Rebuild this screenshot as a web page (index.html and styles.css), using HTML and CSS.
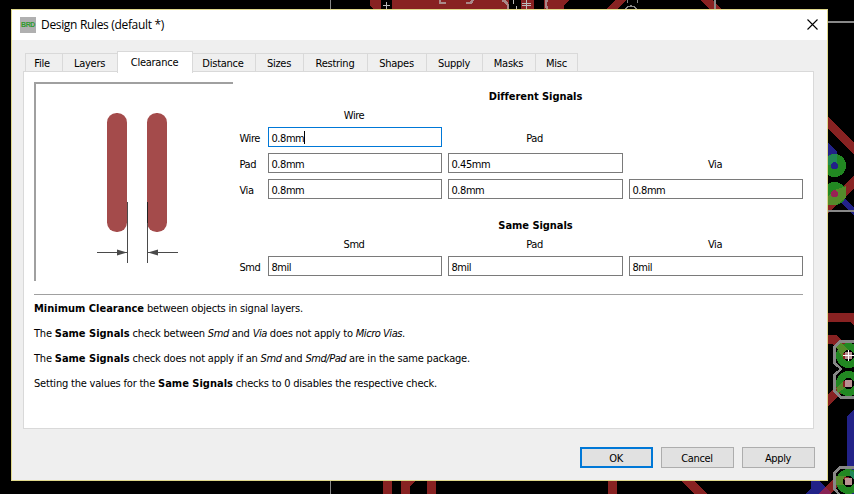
FILE: index.html
```html
<!DOCTYPE html>
<html lang="en">
<head>
<meta charset="utf-8">
<title>Design Rules</title>
<link rel="stylesheet" href="styles.css">
</head>
<body>
<svg class="board" width="854" height="494" viewBox="0 0 854 494" shape-rendering="crispEdges" aria-hidden="true">
  <g fill="#882222">
    <path d="M370 0H381V9H373L370 6ZM392 0H509V9H392ZM521 0H534V9H521ZM544 0H570L564 5V9H544ZM615 0H627L617 9H606ZM700 0H713L721 9H709Z"/>
    <path d="M828 117L854 142V154L828 129ZM854 176V189L828 213V201Z"/>
    <path d="M828 313H854V326L850 322H828ZM828 335H836L851 350L844 356L833 344H828ZM828 395L843 379L851 383L828 407Z"/>
    <path d="M383 481H392V494H383ZM401 481H415L410 486V494H401ZM427 481H436V494H427ZM608 481H617V494H608ZM682 481H695L707 494H694Z"/>
  </g>
  <g fill="#222288">
    <path d="M828 143L837 152V165H828ZM842 196L854 207V216L840 202ZM847 416L854 410V494H847ZM811 481H819L828 490V494H805L811 488Z"/>
  </g>
  <path d="M818 494L836 476H850V485H839L830 494Z" fill="#882222"/>
  <path d="M818 494L825 487L831 493V494Z" fill="#882255"/>
  <g fill="#228822"><circle cx="834.5" cy="165.5" r="11.5"/><circle cx="834.5" cy="193.5" r="11.5"/><circle cx="848.5" cy="355.5" r="12.5"/><circle cx="848.5" cy="383.5" r="12.5"/><circle cx="848.5" cy="481.5" r="12.5"/></g>
  <path d="M828 156L833 154H837V165H828Z" fill="#228855"/>
  <path d="M828 197L834 190L846 186V198L836 205H828ZM836 347L841 343L850 352L843 358ZM836 388L845 379L850 384L838 393ZM836 476H850V485H836Z" fill="#558b2b"/>
  <path d="M850 470L854 472V481H850Z" fill="#22885a"/>
  <circle cx="834.5" cy="165.5" r="3.5" fill="#222288"/>
  <circle cx="834.5" cy="193.5" r="3.5" fill="#992255"/>
  <g fill="#000"><circle cx="848.5" cy="355.5" r="5.5"/><circle cx="848.5" cy="383.5" r="5.5"/><circle cx="848.5" cy="481.5" r="5.5"/></g>
  <path d="M843 353H846V359H843ZM843 381H846V387H843ZM844 477H849V480H844Z" fill="#882222"/>
  <path d="M845 352H852V359H845ZM845 380H852V387H845ZM845 478H852V485H845Z" fill="#b89292"/>
  <path d="M843 355.5H854M848.5 350V361" stroke="#fff"/>
  <g fill="none" stroke="#888">
    <path d="M330.5 0V9M330.5 481V494"/>
    <path stroke-width="2" d="M715 0V9M828 22H854M828 211H854"/>
    <path stroke-width="2.5" d="M854 341.5H840L834.5 347V363L841 369L834.5 375V391L841 397.5H854M854 467.5H840L834.5 473V489L839 494"/>
    <path stroke-width="2.5" stroke="#aa8888" d="M440 0V3H446M466 3H471L473 0M502 0Q507 2 508 5V9M547 0Q545 4 547 9"/>
    <path d="M383 5.5H390M386.500 2V9M513.500 0V4M516.500 6V9M522 3.500H531M522 5.500H531M526.500 0V9" stroke="#bbb"/>
    <path d="M627.500 0V3M637.500 0V3M625 9Q631 3 637 9" stroke-width="1.500"/>
  </g>
</svg>

<main class="dialog">
  <header class="titlebar">
    <span class="app-icon">BRD</span>
    <h1 class="title">Design Rules (default *)</h1>
    <svg class="close" width="11" height="11" viewBox="0 0 11 11"><path d="M.5.5L10.500 10.500M10.500.5L.5 10.500"/></svg>
  </header>

  <nav class="tabs">
    <span class="tab w-file">File</span><span class="tab w-layers">Layers</span><span class="tab active">Clearance</span><span class="tab w-distance">Distance</span><span class="tab w-sizes">Sizes</span><span class="tab w-restring">Restring</span><span class="tab w-shapes">Shapes</span><span class="tab w-supply">Supply</span><span class="tab w-masks">Masks</span><span class="tab w-misc">Misc</span>
  </nav>

  <section class="pane">
    <div class="top">
      <div class="preview">
        <svg width="197" height="196" viewBox="0 0 197 196">
          <g fill="#a44b4b"><rect x="71" y="29" width="20" height="119" rx="9.500"/><rect x="111" y="29" width="20" height="119" rx="9.500"/></g>
          <path class="dim" d="M91.500 118V179M111.500 118V179M61 168.500H91M112 168.500H142"/>
          <path fill="#4a4a4a" d="M81 165.500L91 168.500L81 171.500ZM122 165.500L112 168.500L122 171.500Z"/>
          <path d="M111.500 118V139" stroke="#242020" shape-rendering="crispEdges"/>
        </svg>
      </div>
      <div class="rules">
        <h2 class="heading">Different Signals</h2>
        <div class="row head"><span></span><span class="col">Wire</span></div>
        <div class="row"><span>Wire</span><span class="field focus">0.8mm<i class="caret"></i></span><span class="col">Pad</span></div>
        <div class="row"><span>Pad</span><span class="field">0.8mm</span><span class="field">0.45mm</span><span class="col">Via</span></div>
        <div class="row"><span>Via</span><span class="field">0.8mm</span><span class="field">0.8mm</span><span class="field">0.8mm</span></div>
        <h2 class="heading same">Same Signals</h2>
        <div class="row head"><span></span><span class="col">Smd</span><span class="col">Pad</span><span class="col">Via</span></div>
        <div class="row"><span>Smd</span><span class="field">8mil</span><span class="field">8mil</span><span class="field">8mil</span></div>
      </div>
    </div>
    <div class="notes">
      <p><b>Minimum Clearance</b> between objects in signal layers.</p>
      <p>The <b>Same Signals</b> check between <em>Smd</em> and <em>Via</em> does not apply to <em>Micro Vias</em>.</p>
      <p>The <b>Same Signals</b> check does not apply if an <em>Smd</em> and <em>Smd/Pad</em> are in the same package.</p>
      <p>Setting the values for the <b>Same Signals</b> checks to 0 disables the respective check.</p>
    </div>
  </section>

  <footer class="buttons">
    <button class="btn default">OK</button>
    <button class="btn">Cancel</button>
    <button class="btn">Apply</button>
  </footer>
</main>
</body>
</html>
```
FILE: styles.css
```css
* { box-sizing: border-box; }
body {
  margin: 0;
  width: 854px;
  height: 494px;
  overflow: hidden;
  background: #000;
  color: #000;
  font: 11px/14px "DejaVu Sans Condensed", "DejaVu Sans", sans-serif;
  font-stretch: condensed;
  letter-spacing: -0.45px;
  padding: 9px 0 0 11px;
}
.board { position: absolute; left: 0; top: 0; }
.dialog {
  position: relative;
  width: 817px;
  height: 472px;
  border: 1px solid #e0d98c;
  background: #efefef;
}
.titlebar {
  display: flex;
  align-items: center;
  height: 30px;
  padding: 0 9px 0 8px;
  background: #fff;
}
.app-icon {
  width: 16px;
  height: 16px;
  margin-top: -1px;
  background: #b0b0b0;
  color: #2f9a2f;
  font: bold 7px/16px "Liberation Sans", sans-serif;
  letter-spacing: -0.4px;
  text-align: center;
}
.title {
  flex: 1;
  margin: 0 0 0 5px;
  font: 12px/16px "Open Sans", sans-serif;
  letter-spacing: -0.33px;
}
.close { margin-top: -2px; stroke: #000; stroke-width: 1.1; fill: none; }
.tabs {
  display: flex;
  align-items: flex-end;
  height: 32px;
  padding-left: 13px;
  letter-spacing: -0.25px;
}
.tab {
  height: 19px;
  border: 1px solid #d9d9d9;
  border-left-width: 0;
  border-bottom: 0;
  padding-right: 1px;
  text-align: center;
  line-height: 19px;
}
.tab.w-file { width: 38px; border-left-width: 1px; padding-right: 4px; }
.w-layers { width: 54px; border-right: 0; }
.tab.active {
  position: relative;
  width: 76px;
  height: 22px;
  margin-bottom: -1px;
  border-left-width: 1px;
  background: #fff;
  line-height: 22px;
}
.tab.w-distance { width: 63px; padding-right: 2px; }
.w-sizes { width: 48px; }
.w-restring { width: 64px; }
.w-shapes { width: 59px; }
.w-supply { width: 56px; }
.w-masks { width: 53px; }
.tab.w-misc { width: 42px; padding-right: 0; }
.pane {
  width: 791px;
  height: 358px;
  margin: -1px 0 0 11px;
  padding: 10px 9px 0 10px;
  border: 1px solid #d9d9d9;
  background: #fff;
}
.top { display: flex; height: 213px; border-bottom: 1px solid #a0a0a0; width: 769px; }
.preview {
  width: 199px;
  height: 199px;
  border: solid #a0a0a0;
  border-width: 2px 0 0 2px;
}
.preview svg { display: block; }
.dim { fill: none; stroke: #4a4a4a; shape-rendering: crispEdges; }
.rules { margin: 8px 0 0 6px; width: 564px; }
.heading {
  margin: 0 0 5px 29px;
  text-align: center;
  font: bold 11px/14px "DejaVu Sans Condensed", "DejaVu Sans", sans-serif;
  letter-spacing: -0.05px;
}
.heading.same { margin-top: 20px; }
.row {
  display: grid;
  grid-template-columns: 23px 174px 175px 174px;
  column-gap: 6px;
  height: 20px;
  margin-bottom: 6px;
  line-height: 24px;
}
.row > span:first-child { padding-left: 0.5px; }
.row.head { height: 14px; line-height: 14px; margin-bottom: 4px; }
.col { text-align: center; padding-right: 2px; }
.field {
  height: 20px;
  padding-left: 2.5px;
  border: 1px solid #7a7a7a;
  line-height: 22px;
}
.focus { border-color: #0078d7; }
.caret { display: inline-block; width: 1px; height: 13px; margin-left: 0; background: #000; vertical-align: -2px; }
.notes { padding-top: 7px; letter-spacing: -0.2px; }
.notes b { letter-spacing: 0; }
.notes em { letter-spacing: -0.45px; }
.notes p { margin: 0 0 11px; white-space: nowrap; }
.buttons { display: flex; gap: 8px; margin: 18px 0 0 568px; }
.btn {
  width: 73px;
  height: 21px;
  padding: 2px 1px 0 0;
  border: 1px solid #adadad;
  background: #e1e1e1;
  color: #000;
  font: inherit;
  letter-spacing: -0.35px;
}
.btn.default { border: 2px solid #0078d7; }
```
